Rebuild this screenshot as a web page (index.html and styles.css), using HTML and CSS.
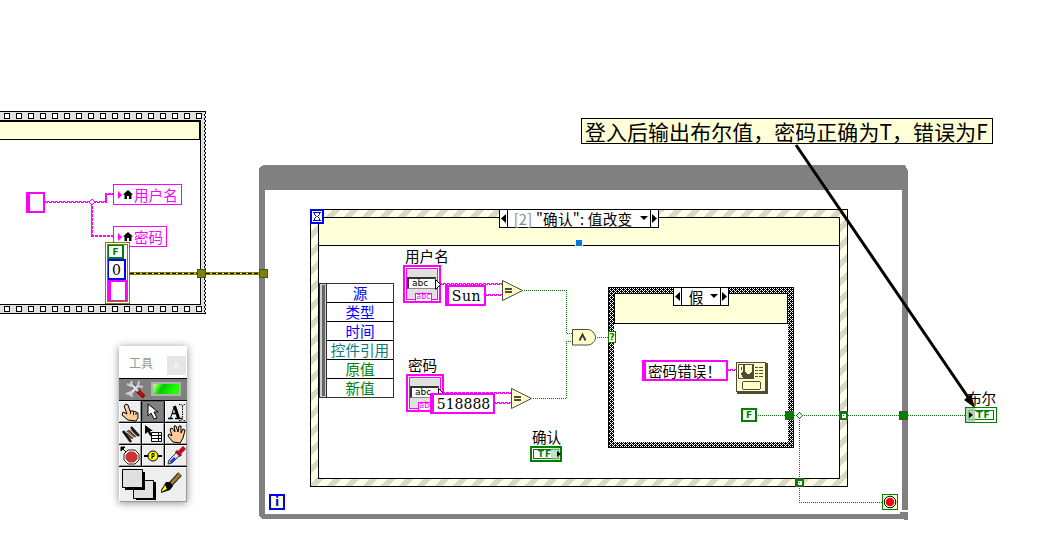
FILE: index.html
```
<!DOCTYPE html>
<html lang="zh-CN">
<head>
	<meta charset="UTF-8">
	<meta name="viewport" content="width=device-width, initial-scale=1.0">
	<title>登入</title>
	<link rel="stylesheet" href="styles.css">
</head>

<body>
	<main class="diagram">
		<!-- structures, tunnels and wires -->
		<svg class="canvas" width="1057" height="538" viewBox="0 0 1057 538" shape-rendering="crispEdges">
			<defs>
				<pattern id="film" width="12" height="10" patternUnits="userSpaceOnUse" patternTransform="translate(4 111)">
					<rect width="12" height="10" fill="#e0e0e0"/>
					<rect x=".5" y="2.5" width="5" height="5" fill="#fff" stroke="#000"/>
				</pattern>
				<pattern id="film2" width="12" height="10" patternUnits="userSpaceOnUse" patternTransform="translate(4 304)">
					<rect width="12" height="10" fill="#e0e0e0"/>
					<rect x=".5" y="2.5" width="5" height="5" fill="#fff" stroke="#000"/>
				</pattern>
				<pattern id="stripe" width="18" height="18" patternUnits="userSpaceOnUse">
					<rect width="18" height="18" fill="#ffffe6"/>
					<path d="M2 0h8L0 10V2zM18 2v8l-8 8H2z" fill="#d9d9c6"/>
				</pattern>
				<pattern id="check" width="4" height="4" patternUnits="userSpaceOnUse">
					<rect width="4" height="4" fill="#000"/>
					<path d="M0 0h1v1h-1zM2 0h1v1h-1zM1 1h1v1h-1zM0 2h1v1h-1zM2 2h1v1h-1zM3 3h1v1h-1z" fill="#fff"/>
				</pattern>
			</defs>

			<!-- flat sequence -->
			<path d="M0 111h205v203H0z" fill="#e0e0e0"/>
			<path d="M0 111h203v10H0z" fill="url(#film)"/>
			<path d="M0 304h203v10H0z" fill="url(#film2)"/>
			<path d="M0 122h200v182H0z" fill="#fff"/>
			<path d="M0 122h199v17H0z" fill="#ffffd8"/>
			<path d="M0 111.5h206M0 304.5h201M0 313.5h206M0 139.5h200M200.5 121v184" stroke="#000"/>
			<path d="M0 121h201M199.5 121v19" stroke="#000" stroke-width="2"/>
			<path d="M205.5 112v202" stroke="#000" stroke-dasharray="2 2"/>
			<path d="M204.5 114v198" stroke="#000" stroke-dasharray="2 2"/>

			<!-- while loop -->
			<path d="M259 170l1-3 2-1 2-1h639l3 1 1 3 1 2v339h-6V190H265v324h635v-2h8v7l-1 1h-3l-1-1H263l-3-2-1-3z" fill="#808080"/>

			<!-- event structure -->
			<path d="M310.500 209.500h537v277h-537z" fill="url(#stripe)" stroke="#000"/>
			<path d="M318.500 217.500h521v261h-521z" fill="#fff" stroke="#000"/>
			<path d="M318.500 217.500h521v28h-521z" fill="#ffffd8" stroke="#000"/>
			<path d="M575 239h8v8h-8z" fill="#fff"/>
			<path d="M576 240h6v6h-6z" fill="#0078d7"/>

			<!-- case structure -->
			<path d="M608.500 287.500h185v160h-185z" fill="url(#check)" stroke="#000"/>
			<path d="M614 293h174v149H614z" fill="#fff"/>
			<path d="M614.500 293.500h173v30h-173z" fill="#ffffd8" stroke="#000"/>

			<!-- string wires -->
			<g class="wire-str">
				<path d="M45 202h61v-8h7M92 202v34h21"/>
				<path d="M441 284h61M486 295h16M444 393h67M495 403h16M728 370h8"/>
			</g>
			<g class="wire-gap">
				<path d="M46 201.500h60M107 193.500h6M92.500 205v30M94 235.500h19M442 283.500h60M487 294.500h15M445 392.500h66M496 402.500h15M729 369.500h7"/>
				<path d="M48 202.500h58M94 236.500h19M444 284.500h58M489 295.500h13M447 393.500h64M498 403.500h13M731 370.500h5"/>
			</g>
			<path d="M92 199l3 3-3 3-3-3z" fill="#fff" stroke="#f0f"/>

			<!-- cluster wire -->
			<path d="M130 273.500h68M206 273.500h54" stroke="#808000" stroke-width="3"/>
			<path d="M130 273.500h68M206 273.500h54" stroke="#ff0"/>
			<path d="M130 273.500h68M206 273.500h54" stroke="#000" stroke-dasharray="4 2"/>
			<path d="M197.500 269.500h8v8h-8zM259.500 269.500h8v8h-8z" fill="#808000" stroke="#4d4d33"/>

			<!-- boolean wires -->
			<g class="wire-bool">
				<path d="M524 290.500h42.500v43h6M533 398.500h33.500v-57h6M597 337.500h11M758 415.500h207M799.500 416v86.500h83"/>
			</g>
			<path d="M799.500 412.500l3 3-3 3-3-3z" fill="#fff" stroke="#008000"/>
			<g fill="#008000" stroke="#4d4d33">
				<path d="M785.500 411.500h8v8h-8zM839.500 411.500h8v8h-8zM899.500 411.500h8v8h-8zM795.500 478.500h8v8h-8z"/>
			</g>
			<path d="M842 414h4v4h-4zM798 481h4v4h-4z" fill="#fff"/>
			<path d="M843 415h1v1h-1zM799 482h1v1h-1z" fill="#008000"/>

			<!-- functions -->
			<g fill="#ffffcc" stroke="#4d4d33" shape-rendering="auto">
				<path d="M502.500 280.500v20l20-10z"/>
				<path d="M511.500 388.500v20l20-10z"/>
				<path d="M572.500 329.500h15c4 0 8 4 8 8s-4 7.500-8 7.500h-15z"/>
			</g>
			<path d="M505 289h7M505 292h7M514 397h7M514 400h7" stroke="#4d4d33" stroke-width="2"/>
			<path d="M579.500 340.500l3-6 3 6" fill="none" stroke="#333" stroke-width="1.800" shape-rendering="auto"/>

			<!-- dialog -->
			<path d="M737 363h31v31h-31z" fill="#4d4d33"/>
			<path d="M736.500 362.500h29v29h-29z" fill="#ffffcc" stroke="#4d4d33"/>
			<path d="M738.500 364.500h15v14h-15z" fill="#4d4d33" stroke="#4d4d33"/>
			<path d="M739 365h4v6l-2 3 2 4h-4zM745 365h7v6l-2 3h-3l-2-3z" fill="#ffffcc"/>
			<path d="M741 367h1v3h-1zM744 372h1v2h-1z" fill="#4d4d33"/>
			<path d="M755 367.500h9M755 370.500h9M755 373.500h9M755 376.500h9" stroke="#4d4d33" stroke-dasharray="3 1 4 1"/>
			<rect x="742.500" y="381.500" width="18" height="8" rx="2" fill="none" stroke="#4d4d33"/>
		</svg>

		<!-- event data node -->
		<section class="event-data">
			<div class="grip"></div>
			<ul>
				<li>源</li>
				<li>类型</li>
				<li>时间</li>
				<li class="ref">控件引用</li>
				<li class="val">原值</li>
				<li class="val">新值</li>
			</ul>
		</section>

		<!-- structure selectors -->
		<div class="selector event-sel">
			<svg width="7" height="17"><path d="M6 4v9L1 8.500z"/></svg>
			<span><i>[2]</i> "确认": 值改变</span>
			<svg class="drop" width="9" height="17"><path d="M0 6h8L4 10z"/></svg>
			<svg class="next" width="7" height="17"><path d="M1 4v9l5-4.500z"/></svg>
		</div>
		<div class="selector case-sel">
			<svg width="7" height="17"><path d="M6 4v9L1 8.500z"/></svg>
			<span>假</span>
			<svg class="drop" width="9" height="17"><path d="M0 6h8L4 10z"/></svg>
			<svg class="next" width="7" height="17"><path d="M1 4v9l5-4.500z"/></svg>
		</div>

		<!-- sequence contents -->
		<div class="str empty"></div>
		<div class="prop prop-user">
			<svg width="16" height="12"><path d="M0 2l4 4-4 4z" fill="#f0f"/><path d="M10 1l5 4.500h-1.500V10H11V7H9v3H6.500V5.500H5z"/></svg>用户名
		</div>
		<div class="prop prop-pass">
			<svg width="16" height="12"><path d="M0 2l4 4-4 4z" fill="#f0f"/><path d="M10 1l5 4.500h-1.500V10H11V7H9v3H6.500V5.500H5z"/></svg>密码
		</div>
		<div class="cluster">
			<b class="bool">F</b>
			<span class="num">0</span>
			<span class="blank"></span>
		</div>

		<!-- controls -->
		<label class="label lbl-user">用户名</label>
		<div class="control ctl-user">
			<span class="field">abc</span>
			<span class="type">abc</span>
			<svg class="out" width="6" height="11"><path d="M.5.5l5 5-5 5z" fill="#fff" stroke="#000"/></svg>
		</div>
		<label class="label lbl-pass">密码</label>
		<div class="control ctl-pass">
			<span class="field">abc</span>
			<span class="type">abc</span>
			<svg class="out" width="6" height="11"><path d="M.5.5l5 5-5 5z" fill="#fff" stroke="#000"/></svg>
		</div>
		<div class="str sun">Sun</div>
		<div class="str digits">518888</div>
		<label class="label lbl-ok">确认</label>
		<div class="tf tf-ok"><b>TF</b></div>
		<div class="query">?</div>
		<div class="str message">密码错误！</div>
		<b class="bool const-f">F</b>
		<label class="label lbl-out">布尔</label>
		<div class="tf tf-out"><b>TF</b></div>

		<!-- loop terminals -->
		<div class="timeout">
			<svg width="10" height="11"><path d="M1 1.500h8M1 9.500h8M2.500 2v1.500l2 2-2 2V9M7.500 2v1.500l-2 2 2 2V9" fill="none" stroke="#00f"/></svg>
		</div>
		<b class="iter">i</b>
		<div class="stop">
			<svg width="14" height="14"><circle cx="7" cy="7" r="5.800" fill="#fff" stroke="#000"/><circle cx="7" cy="7" r="4.300" fill="#f00"/></svg>
		</div>

		<p class="comment">登入后输出布尔值，密码正确为T，错误为F</p>
		<svg class="pointer" width="190" height="270"><path d="M5 4L181 262" stroke="#000" stroke-width="3"/><path d="M184 267l-11-8 7-6z"/></svg>

		<!-- tools palette -->
		<aside class="tools">
			<header><h2>工具</h2><span class="close">x</span></header>
			<div class="auto">
				<svg width="22" height="20"><path d="M5 4l9 9" stroke="#333" stroke-width="4"/><path d="M5 4l9 9M4 16L14 6" stroke="#ddd" stroke-width="2.500"/><path d="M2 5l4 2 1-5M14 2l-1 5 5 1M1 15l5-2 1 5" fill="none" stroke="#ccc" stroke-width="2"/><path d="M13 12l6 6" stroke="#900" stroke-width="4"/><path d="M13 12l5 5" stroke="#e33"/></svg>
				<span class="led"></span>
			</div>
			<div class="grid">
				<span><svg width="20" height="20"><path d="M8 18l-6-5 1-3 4 2L4 4l2-2 2 1 2 6h3l3 1 2 1v5l-2 3z" fill="#fc9" stroke="#000"/><path d="M10.500 9v3M13.500 10v3M16 11v2" stroke="#000"/></svg></span>
				<span class="on"><svg width="20" height="20"><path d="M5 2v12l3-3 3 6 3-1-3-6h4z" fill="#fff" stroke="#000"/></svg></span>
				<span><svg width="20" height="20"><path d="M4.500 16L8.500 4" stroke="#000"/><path d="M8.500 4l4 12" stroke="#000" stroke-width="3"/><path d="M6 11.500h5M2 16.500h5M9 16.500h7" stroke="#000" stroke-width="1.500"/><path d="M13 2.500h2l1.500 1 1.500-1h2M16.500 4v13M13 18.500h2l1.500-1 1.500 1h2" fill="none" stroke="#000" stroke-dasharray="1.500 1"/></svg></span>
				<span><svg width="20" height="20"><path d="M6 7l7-2 4 7-8 4z" fill="#765"/><path d="M7 8l7 6M10 6l6 6M6 11l5 5" stroke="#dcb"/><path d="M8 6l8 7M6 9l7 6" stroke="#432"/><path d="M3 7l8 11M11 3l8 9" stroke="#111" stroke-width="2.500"/></svg></span>
				<span><svg width="20" height="20"><path d="M2 1v9l3-2 2 4 2-1-2-4h3z"/><path d="M8.500 8.500h10v9h-10zM8 11.500h10M8 14.500h10M15.500 9v9" fill="#fff" stroke="#000"/></svg></span>
				<span><svg width="20" height="20"><path d="M7 18l-5-6 1-2 3 2-2-7 2-1 3 4-1-6h2l2 6 1-6h2v7l2-4 2 1-2 8-3 5z" fill="#fc9" stroke="#000"/></svg></span>
				<span><svg width="20" height="20"><path d="M8 4h7l4 4v6l-4 4H8l-4-4V8z" fill="#fff" stroke="#222"/><path d="M9 6h5l3 3v4l-3 3H9l-3-3V9z" fill="#c33" stroke="#c33"/><path d="M1 1h4L1 5zM2 2l4 4" stroke="#000"/></svg></span>
				<span><svg width="20" height="20"><path d="M1 10h18" stroke="#000" stroke-width="2"/><circle cx="10" cy="10" r="5" fill="#ff0" stroke="#000"/><path d="M9 13V7.500h2v3H9" fill="none" stroke="#000"/></svg></span>
				<span><svg width="20" height="20"><path d="M2 18l1-4 8-8 3 3-8 8z" fill="#ddf" stroke="#333"/><path d="M3 16l5-5 2 2-4 4z" fill="#24d"/><path d="M10 5l5 5" stroke="#811" stroke-width="3"/><path d="M13 6l4-4 1 1-4 4z" fill="#c12" stroke="#b12" stroke-width="3"/></svg></span>
			</div>
			<div class="colors">
				<svg width="66" height="33"><path d="M16 14h20v18H16z"/><path d="M13.500 12.500h20v18h-20z" fill="#e0e0e0" stroke="#000"/><path d="M5 4h20v18H5z"/><path d="M2.500 1.500h20v18h-20z" fill="#e0e0e0" stroke="#000"/><path d="M60 6L49 18" stroke="#222" stroke-width="5"/><path d="M60 6L50 17" stroke="#a73" stroke-width="3"/><path d="M50 14l3 4-3 4-9 3v-3l5-8z"/><path d="M41 24l4-7 2 4z" fill="#ff0"/></svg>
			</div>
		</aside>
	</main>
</body>

</html>
```
FILE: styles.css
```
body {
	margin: 0;
	background: #fff;
	color: #000;
	font-family: "Noto Sans CJK SC", sans-serif;
	font-size: 14.6px;
}

* {box-sizing: border-box;}

.diagram {position: relative; width: 1057px; height: 538px; overflow: hidden; line-height: 1;}
.diagram svg {display: block; flex: none;}
.canvas {position: absolute; left: 0; top: 0;}

.wire-str path {fill: none; stroke: #f0f; stroke-width: 2;}
.wire-gap path {fill: none; stroke: #fff; stroke-dasharray: 1 3;}
.wire-bool path {fill: none; stroke: #008000; stroke-dasharray: 1 1;}

/* event data node */
.event-data {position: absolute; left: 319px; top: 283px; width: 75px; height: 115px; display: flex; border: 1px solid #333;}
.grip {width: 7px; background: #ccc; border-left: 1px solid #ccc; border-right: 1px solid #333;}
.grip::before {content: ""; display: block; width: 3px; height: 111px; margin: 1px 1px; background: #666;}
.event-data ul {flex: 1; margin: 0; padding: 0; list-style: none;}
.event-data li {height: 19px; line-height: 17px; text-align: center; color: #00f; border-bottom: 1px solid #000;}
.event-data li:last-child {border: 0;}
.event-data .ref {color: #008080;}
.event-data .val {color: #008000;}

/* selectors */
.selector {position: absolute; display: flex; align-items: center; height: 19px; background: #fff; border: 1px solid #000;}
.selector svg {border-right: 1px solid #000; width: 8px;}
.selector svg.drop {border: 0; width: 9px; margin-right: 1px;}
.selector svg.next {border: 0; border-left: 1px solid #000; width: 8px;}
.selector span {flex: 1; padding-top: 1px; text-align: center; white-space: nowrap;}
.selector i {font-style: normal; color: #888;}
.event-sel {left: 499px; top: 209px; width: 160px; letter-spacing: 0.25px;}
.event-sel span {padding-right: 2px;}
.case-sel {left: 673px; top: 287px; width: 56px;}

/* string constants */
.str {
	position: absolute;
	display: flex;
	align-items: center;
	justify-content: center;
	height: 21px;
	border: 2px solid #f0f;
	border-left-width: 4px;
	background: #fff;
	white-space: nowrap;
}
.empty {left: 26px; top: 192px; width: 19px;}
.sun {left: 445px; top: 285px; width: 41px; font-family: "DejaVu Serif", serif; font-size: 14px; letter-spacing: 0.6px;}
.digits {left: 430px; top: 393px; width: 65px; font-family: "DejaVu Serif", serif; font-size: 14px;}
.message {left: 642px; top: 360px; width: 86px; justify-content: flex-start; padding-left: 2px; padding-top: 1px;}

.prop {position: absolute; display: flex; align-items: center; height: 21px; padding: 1px 0 0 4px; border: 1px solid #f0f; background: #fff; color: #f0f;}
.prop-user {left: 113px; top: 184px; width: 69px;}
.prop-pass {left: 113px; top: 226px; width: 54px;}

.cluster {position: absolute; left: 105px; top: 242px; width: 25px; height: 62px; background: #fff; border: 1px solid #808000; outline: 1px solid #808000; outline-offset: -3px; padding: 1px;}
.bool {display: flex; align-items: center; justify-content: center; width: 17px; height: 15px; border: 2px solid #008000; background: #fff; color: #008000; font: bold 9px "DejaVu Sans", sans-serif;}
.num {display: flex; align-items: center; justify-content: center; width: 19px; height: 21px; border: 2px solid #00f; background: #fff; font-family: "DejaVu Serif", serif; font-size: 14px;}
.blank {display: block; width: 20px; height: 22px; border: 2px solid #f0f; border-left-width: 4px; background: #fff;}
.const-f {position: absolute; left: 741px; top: 408px; width: 16px; height: 14px;}

/* controls */
.label {position: absolute; white-space: nowrap;}
.lbl-user {left: 405px; top: 249px;}
.lbl-pass {left: 408px; top: 358px;}
.lbl-ok {left: 532px; top: 430px;}
.lbl-out {left: 967px; top: 391px;}
.control {
	position: absolute;
	width: 38px;
	height: 38px;
	padding: 10px 0 0 2px;
	border: 2px solid #f0f;
	background: #e0e0e0;
	box-shadow: inset 0 0 0 1px #fff, inset 0 0 0 2px #f0f;
	font-family: "DejaVu Sans", sans-serif;
}
.ctl-user {left: 403px; top: 265px;}
.ctl-pass {left: 406px; top: 374px;}
.field {display: block; width: 29px; height: 12px; padding-left: 3px; background: #fff; border: 1px solid #888; border-top: 2px solid #333; border-left: 2px solid #333; font-size: 9px; line-height: 8px;}
.type {display: block; width: 17px; height: 9px; margin: 4px 0 0 8px; background: #fff; border: 1px solid #f0f; color: #f0f; font-size: 8px; line-height: 6px; text-align: center;}
.control .out {position: absolute; left: 30px; top: 12px;}

.tf {position: absolute; width: 32px; height: 16px; padding: 2px; border: 1px solid #008000; background: #fff; color: #008000;}
.tf b {display: block; height: 100%; border: 1px solid #008000; font: bold 9px/8px "DejaVu Sans", sans-serif; letter-spacing: 1px; text-align: center;}
.tf::before, .tf::after {content: ""; position: absolute;}
.tf::before {top: 0; width: 9px; height: 14px; background: rgba(160, 205, 160, 0.8);}
.tf::after {top: 4px; border: 3px solid transparent; border-left: 4px solid #000; border-right: 0;}
.tf-ok {left: 530px; top: 446px; padding: 1px; border-width: 2px;}
.tf-ok b {padding-right: 2px;}
.tf-ok::before {right: 0; height: 12px; background: rgba(160, 205, 160, 0.6);}
.tf-ok::after {right: -1px; top: 3px;}
.tf-out {left: 965px; top: 407px;}
.tf-out b {padding-left: 5px;}
.tf-out::before {left: 0;}
.tf-out::after {left: 3px;}

.query {position: absolute; left: 608px; top: 331px; width: 8px; height: 12px; border: 1px solid #008000; background: #ffffcc; color: #008000; font: bold 9px/10px "DejaVu Sans", sans-serif; text-align: center;}
.timeout {position: absolute; left: 310px; top: 209px; width: 14px; height: 15px; border: 2px solid #00f; background: #ffffd8;}
.iter {position: absolute; left: 269px; top: 494px; width: 16px; height: 16px; border: 2px solid #00f; background: #ffffcc; color: #00f; font: bold 12px/12px "DejaVu Sans", sans-serif; text-align: center;}
.stop {position: absolute; left: 882px; top: 494px; width: 16px; height: 16px; border: 1px solid #008000; background: #ffffcc;}

.comment {position: absolute; left: 581px; top: 118px; width: 412px; height: 26px; margin: 0; padding-left: 3px; border: 1px solid #000; background: #ffffd8; font-size: 20.9px; line-height: 24px; letter-spacing: 0.14px; white-space: nowrap;}
.pointer {position: absolute; left: 791px; top: 141px;}

/* tools palette */
.tools {position: absolute; left: 119px; top: 346px; width: 68px; height: 156px; background: #fff; box-shadow: 0 1px 8px rgba(0, 0, 0, 0.45);}
.tools header {display: flex; justify-content: space-between; height: 32px; padding: 10px 1px 0 10px;}
.tools h2 {margin: 0; font-size: 12px; font-weight: normal; line-height: 14px; color: #999;}
.close {width: 19px; height: 19px; background: #e5e5e5; color: #fff; font: 9px/18px "DejaVu Sans", sans-serif; text-align: center;}
.auto {display: flex; align-items: center; justify-content: space-between; height: 23px; padding: 0 6px 2px; background: #808080; border-top: 1px solid #000; border-bottom: 1px solid #000;}
.led {width: 30px; height: 14px; border: 2px solid #b0b0b0; background: linear-gradient(120deg, #9f6 10%, #0c0 35%, #2f0 80%);}
.grid {display: grid; grid-template-columns: repeat(3, 1fr); grid-auto-rows: 21px; gap: 1px; background: #000; border-bottom: 1px solid #000;}
.grid span {display: flex; align-items: center; justify-content: center; background: #eee; border: 1px solid #fff; border-right-color: #999; border-bottom-color: #999;}
.grid .on {background: #808080; border-color: #666;}
.colors {height: 35px; background: #eee; border: 1px solid #fff; border-right-color: #999; border-bottom-color: #999;}
```
